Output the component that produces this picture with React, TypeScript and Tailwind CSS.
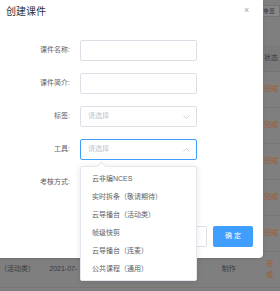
const rows = ['完成', '完成', '完成', '完成', '完成']

function Chevron({ up }: { up?: boolean }) {
  return (
    <svg width="7" height="4" viewBox="0 0 7 4" className="text-[#c0c4cc]">
      <polyline
        points={up ? '0.5,3.5 3.5,0.5 6.5,3.5' : '0.5,0.5 3.5,3.5 6.5,0.5'}
        fill="none"
        stroke="currentColor"
        strokeWidth="0.8"
      />
    </svg>
  )
}

const options = ['云非编NCES', '实时拆条（敬请期待）', '云导播台（活动类）', '帧级快剪', '云导播台（连麦）', '公共课程（通用）']

export default function App() {
  return (
    <div className="relative w-[280px] h-[291px] overflow-hidden bg-[#7f7f7f] font-['Liberation_Sans','Noto_Sans_CJK_SC',sans-serif]">
      {/* page behind the mask */}
      <div className="flex flex-col">
        <div className="h-[45px] flex justify-end pt-[5px]">
          <div className="h-[12px] w-[20px] bg-[#888] border border-[#747474] rounded-[1px] text-[6px] leading-[10px] pl-[2px] text-[#3c3c3c]">重置</div>
        </div>
        <div className="h-[27px] flex items-center justify-end bg-[#7a7a7a] border-b border-[#747474]">
          <span className="w-[16px] text-[7px] text-[#3a3a3a]">状态</span>
        </div>
        {rows.map((r, i) => (
          <div key={i} className="h-[36px] flex items-center justify-end border-b border-[#767676]">
            <span className="w-[16px] text-[7px] text-[#a35b26]">{r}</span>
          </div>
        ))}
        <div className="h-[36px] flex items-center border-b border-[#767676] text-[7px] text-[#3a3a3a]">
          <span className="w-[50px]">（活动类）</span>
          <span className="w-[175px]">2021-07-</span>
          <span className="w-[45px]">制作</span>
          <span className="text-[#a35b26]">完成</span>
        </div>
      </div>

      {/* dialog */}
      <div className="absolute top-0 left-0 w-[263px] h-[258px] bg-white rounded-br-[4px] shadow-sm">
        <div className="pl-[6px] pt-[6px] text-[10px] leading-[12px] text-[#303133]">创建课件</div>
        <span className="absolute top-[4px] left-[244px] text-[9px] leading-[12px] text-[#a0a3a8]">×</span>

        <div className="mt-[22px] flex flex-col gap-[12px] text-[7px] text-[#606266]">
          <div className="flex items-center h-[21px]">
            <label className="w-[70px] text-right">课件名称:</label>
            <div className="ml-[10px] w-[117px] h-[21px] border border-[#dcdfe6] rounded-[2px]" />
          </div>
          <div className="flex items-center h-[21px]">
            <label className="w-[70px] text-right">课件简介:</label>
            <div className="ml-[10px] w-[117px] h-[21px] border border-[#dcdfe6] rounded-[2px]" />
          </div>
          <div className="flex items-center h-[21px]">
            <label className="w-[70px] text-right">标签:</label>
            <div className="ml-[10px] w-[117px] h-[21px] border border-[#dcdfe6] rounded-[2px] flex items-center justify-between pl-[7px] pr-[6px]">
              <span className="text-[#c0c4cc]">请选择</span>
              <Chevron />
            </div>
          </div>
          <div className="flex items-center h-[21px]">
            <label className="w-[70px] text-right">工具:</label>
            <div className="ml-[10px] w-[117px] h-[21px] border border-[#409eff] rounded-[2px] flex items-center justify-between pl-[7px] pr-[6px]">
              <span className="text-[#c0c4cc]">请选择</span>
              <Chevron up />
            </div>
          </div>
          <div className="flex items-center h-[21px]">
            <label className="w-[70px] text-right">考核方式:</label>
          </div>
        </div>

        <div className="mt-[33px] flex justify-end gap-[6px] pr-[10px]">
          <button className="w-[40px] h-[21px] border border-[#dcdfe6] rounded-[2px] bg-white text-[7px] text-[#606266]">取 消</button>
          <button className="w-[40px] h-[21px] rounded-[2px] bg-[#409eff] text-[7px] text-white">确 定</button>
        </div>

        {/* select dropdown */}
        <div className="absolute top-[166px] left-[80px] w-[117px] h-[115px] bg-white border border-[#e4e7ed] rounded-[2px] shadow-[0_1px_6px_rgba(0,0,0,0.1)] py-[3px]">
          <div className="absolute -top-[4px] left-[17px] w-[7px] h-[7px] rotate-45 bg-white border-l border-t border-[#e4e7ed]" />
          {options.map((o) => (
            <div key={o} className="h-[18px] flex items-center pl-[11px] text-[7px] text-[#606266]">{o}</div>
          ))}
        </div>
      </div>
    </div>
  )
}
